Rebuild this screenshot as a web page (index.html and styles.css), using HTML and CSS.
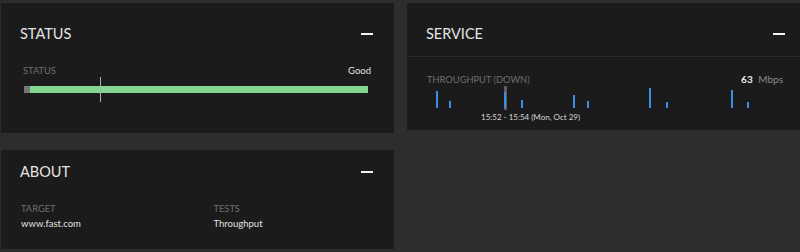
FILE: index.html
```html
<!DOCTYPE html>
<html lang="en">
<head>
  <meta charset="UTF-8" />
  <meta name="viewport" content="width=device-width, initial-scale=1.0" />
  <title>Fast.com monitor</title>
  <link rel="stylesheet" href="styles.css">
</head>
<body>

  <div class="layout">
    <div class="column">

      <div class="panel panel-status">
        <div class="panel-head">
          <h2>STATUS</h2>
          <span class="collapse"></span>
        </div>
        <div class="panel-body">
          <div class="row">
            <span class="label">STATUS</span>
            <span class="value">Good</span>
          </div>
          <div class="track">
            <div class="track-unknown"></div>
            <div class="track-good"></div>
            <div class="track-cursor"></div>
          </div>
        </div>
      </div>

      <div class="panel panel-about">
        <div class="panel-head">
          <h2>ABOUT</h2>
          <span class="collapse"></span>
        </div>
        <div class="panel-body about-grid">
          <div>
            <div class="label">TARGET</div>
            <div class="value">www.fast.com</div>
          </div>
          <div>
            <div class="label">TESTS</div>
            <div class="value">Throughput</div>
          </div>
        </div>
      </div>

    </div>

    <div class="panel panel-service">
      <div class="panel-head">
        <h2>SERVICE</h2>
        <span class="collapse"></span>
      </div>
      <div class="panel-body">
        <div class="row">
          <span class="label">THROUGHPUT (DOWN)</span>
          <span class="speed"><b>63</b> Mbps</span>
        </div>
        <div class="chart">
          <div class="chart-cursor"></div>
          <div class="bar" style="left: 9px; height: 17px"></div>
          <div class="bar" style="left: 22px; height: 7px"></div>
          <div class="bar" style="left: 77px; height: 16px"></div>
          <div class="bar" style="left: 94px; height: 8px"></div>
          <div class="bar" style="left: 146px; height: 13px"></div>
          <div class="bar" style="left: 160px; height: 7px"></div>
          <div class="bar" style="left: 222px; height: 20px"></div>
          <div class="bar" style="left: 239px; height: 6px"></div>
          <div class="bar" style="left: 304px; height: 18px"></div>
          <div class="bar" style="left: 320px; height: 6px"></div>
        </div>
        <div class="chart-time">15:52 - 15:54 (Mon, Oct 29)</div>
      </div>
    </div>
  </div>

</body>
</html>
```

FILE: styles.css
```css
* {
  box-sizing: border-box;
  margin: 0;
  padding: 0;
}

body {
  font-family: Lato, 'Open Sans', sans-serif;
  background-color: #2d2d2d;
  color: #e2e2e2;
  overflow: hidden;
}

.layout {
  display: grid;
  grid-template-columns: 393px 400px;
  column-gap: 13px;
  align-items: start;
  padding: 3px 0 0 1px;
}

.column {
  display: flex;
  flex-direction: column;
  gap: 17px;
}

.panel {
  background-color: #1b1b1b;
}

.panel-head {
  display: flex;
  align-items: center;
  justify-content: space-between;
  padding: 21px 21px 0 19px;
}

.panel-head h2 {
  font-size: 14.5px;
  font-weight: 400;
  line-height: 20px;
  color: #e4e4e4;
}

.collapse {
  width: 12px;
  height: 2px;
  background: #f2f2f2;
  margin-top: -1px;
}

.panel-body {
  padding: 20px 23px 40px 22px;
}

.row {
  display: flex;
  justify-content: space-between;
  align-items: baseline;
}

.label {
  font-size: 9.3px;
  line-height: 14px;
  color: #6f6f6f;
}

.value {
  font-size: 9.5px;
  line-height: 14px;
  color: #e0e0e0;
}

/* status bar */
.track {
  position: relative;
  display: flex;
  height: 7px;
  margin: 8px 3px 0 1px;
}

.track-unknown {
  width: 6px;
  background: #777;
}

.track-good {
  flex: 1;
  background: #85d592;
}

.track-cursor {
  position: absolute;
  left: 76px;
  top: -9px;
  width: 1px;
  height: 25px;
  background: #b0b0b0;
}

/* about */
.panel-about .panel-head {
  padding-top: 12px;
}

.about-grid {
  display: grid;
  grid-template-columns: 1fr 1fr;
  column-gap: 32px;
  padding: 20px 20px 17px 20px;
}

.about-grid .value {
  line-height: 16px;
}

/* service */
.panel-service .panel-head {
  padding: 21px 22px 12px 19px;
  border-bottom: 1px solid #2b2b2b;
}

.panel-service .panel-body {
  padding: 16px 24px 7px 20px;
}

.panel-service .row {
  height: 13px;
}

.speed {
  font-size: 10px;
  color: #8a8a8a;
}

.speed b {
  color: #ececec;
  font-weight: 700;
  margin-right: 3px;
}

.chart {
  position: relative;
  height: 24px;
}

.chart-cursor {
  position: absolute;
  left: 77px;
  top: 0;
  width: 3px;
  height: 24px;
  background: #5e5e5e;
}

.bar {
  position: absolute;
  bottom: 2px;
  width: 2px;
  background: #3a8ee6;
}

.chart-time {
  margin: 1px 0 0 54px;
  font-size: 8px;
  line-height: 12px;
  color: #d6d6d6;
}
```
